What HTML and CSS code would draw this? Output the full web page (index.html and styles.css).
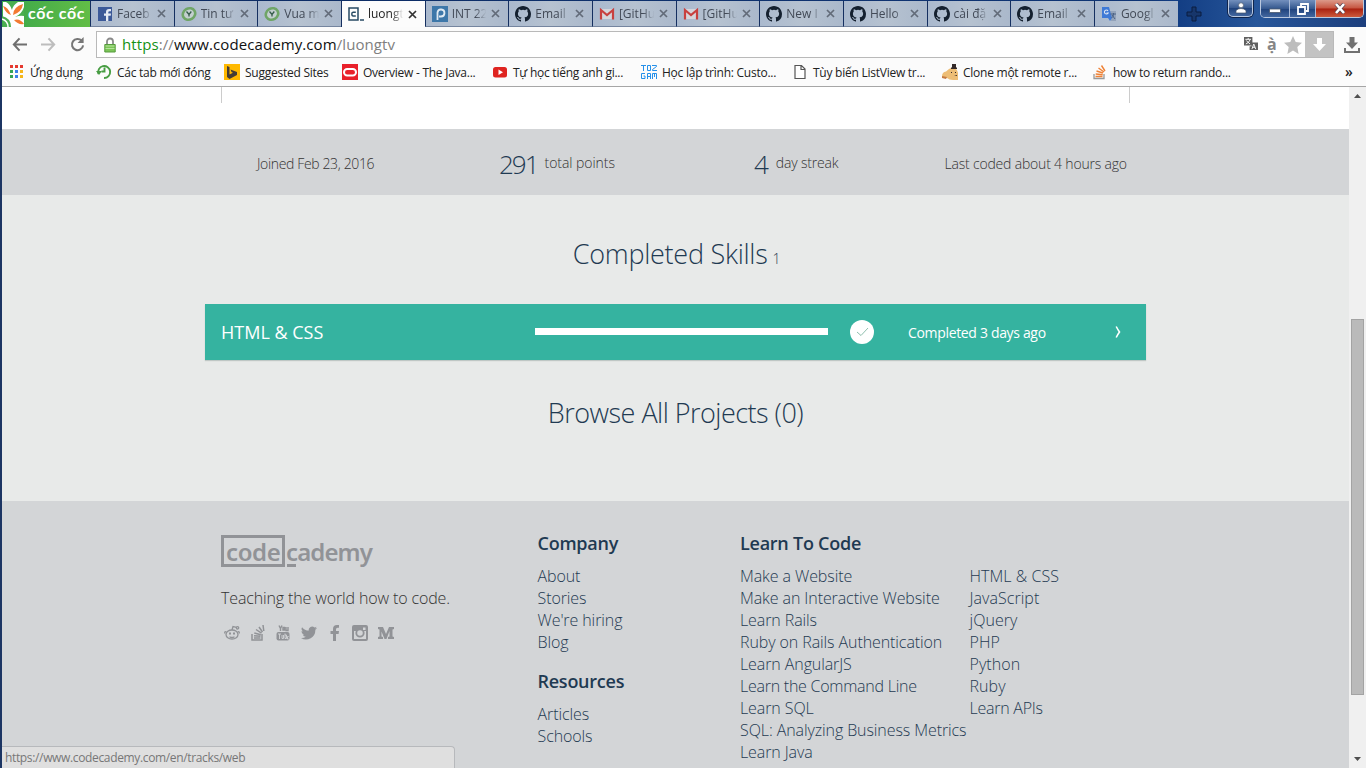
FILE: index.html
```html
<!DOCTYPE html>
<html lang="vi">
<head>
<meta charset="utf-8">
<title>luongtv | Codecademy</title>
<link rel="stylesheet" href="styles.css">
</head>
<body>
<svg width="0" height="0" class="defs">
  <symbol id="github" viewBox="0 0 16 16"><path fill="#14202f" d="M8 0C3.58 0 0 3.58 0 8c0 3.54 2.29 6.53 5.47 7.59.4.07.55-.17.55-.38 0-.19-.01-.82-.01-1.49-2.01.37-2.53-.49-2.69-.94-.09-.23-.48-.94-.82-1.13-.28-.15-.68-.52-.01-.53.63-.01 1.08.58 1.23.82.72 1.21 1.87.87 2.33.66.07-.52.28-.87.51-1.07-1.78-.2-3.64-.89-3.64-3.95 0-.87.31-1.59.82-2.15-.08-.2-.36-1.02.08-2.12 0 0 .67-.21 2.2.82a7.6 7.6 0 0 1 4 0c1.53-1.04 2.2-.82 2.2-.82.44 1.1.16 1.92.08 2.12.51.56.82 1.27.82 2.15 0 3.07-1.87 3.75-3.65 3.95.29.25.54.73.54 1.48 0 1.07-.01 1.93-.01 2.2 0 .21.15.46.55.38A8 8 0 0 0 16 8c0-4.42-3.58-8-8-8z"/></symbol>
  <symbol id="gmail" viewBox="0 0 16 16"><path fill="#d5d5db" d="M1 3h14v10H1z"/><path fill="none" stroke="#c8403f" stroke-width="2.2" d="M2 13.500V4l6 5 6-5v9.500"/></symbol>
  <symbol id="leaf" viewBox="0 0 16 16"><ellipse cx="8" cy="8" rx="6.400" ry="5.600" fill="#c3cfcf" stroke="#6fa567" stroke-width="2.600" transform="rotate(-30 8 8)"/><path fill="none" stroke="#345b49" stroke-width="1.300" d="M5.500 5.500l2.500 3L10.300 5.500M8 8.500v2"/></symbol>
  <symbol id="x" viewBox="0 0 9 9"><path fill="none" stroke="currentColor" stroke-width="1.700" d="M1 1l7 7M8 1L1 8"/></symbol>
</svg>
<div class="window">
  <header class="tabs">
    <div class="brand">
      <svg width="24" height="26" viewBox="0 0 24 26"><path fill="#fff" d="M1 1h21v25H1z"/><path fill="#f37a32" d="M1 5q5 1 8 9-5-1-8-9zM11 14q0-8 10-11-1 8-10 11zM12 19q6-2 10 4-6 1-10-4z"/><path fill="#4aae50" d="M4 1h12q-5 3-6 8-2-6-6-8zM22 6v9q-4-1-9 1 7-3 9-10zM0 15q9 2 9 11H1z"/><path fill="none" stroke="#fff" stroke-width="1.500" d="M0 18q6 2 6 8"/></svg>
      <span>cốc cốc</span>
    </div>
    <div class="tab"><svg class="fav" viewBox="0 0 16 16"><path fill="#3b5998" d="M1 1h14v14H1z"/><path fill="#e4eaf4" d="M9 15V9.700H7V7.500h2V6q0-3 3-3h2v2.200h-1.500Q11.300 5.200 11.300 6.300v1.200H14l-.3 2.200h-2.400V15z"/></svg><span>Faceb</span><svg class="close"><use href="#x"/></svg></div>
    <div class="tab"><svg class="fav"><use href="#leaf"/></svg><span>Tin tư</span><svg class="close"><use href="#x"/></svg></div>
    <div class="tab"><svg class="fav"><use href="#leaf"/></svg><span>Vua m</span><svg class="close"><use href="#x"/></svg></div>
    <div class="tab active"><svg class="fav" viewBox="0 0 16 16"><path fill="none" stroke="#274a63" stroke-width="1.500" d="M1 2h9v12H1zM12 14h4M7.800 6.200H5Q3.800 6.200 3.800 8T5 10h2.800"/></svg><span>luongt</span><svg class="close"><use href="#x"/></svg></div>
    <div class="tab"><svg class="fav" viewBox="0 0 16 16"><path fill="#3d77a9" d="M0 0h16v16H0z"/><path fill="none" stroke="#dfe9f2" stroke-width="1.800" d="M5.500 14V6.500a3.500 3.500 0 1 1 3.500 4H7"/></svg><span>INT 22</span><svg class="close"><use href="#x"/></svg></div>
    <div class="tab"><svg class="fav"><use href="#github"/></svg><span>Email</span><svg class="close"><use href="#x"/></svg></div>
    <div class="tab"><svg class="fav"><use href="#gmail"/></svg><span>[GitHu</span><svg class="close"><use href="#x"/></svg></div>
    <div class="tab"><svg class="fav"><use href="#gmail"/></svg><span>[GitHu</span><svg class="close"><use href="#x"/></svg></div>
    <div class="tab"><svg class="fav"><use href="#github"/></svg><span>New I</span><svg class="close"><use href="#x"/></svg></div>
    <div class="tab"><svg class="fav"><use href="#github"/></svg><span>Hello</span><svg class="close"><use href="#x"/></svg></div>
    <div class="tab"><svg class="fav"><use href="#github"/></svg><span>cài đặ</span><svg class="close"><use href="#x"/></svg></div>
    <div class="tab"><svg class="fav"><use href="#github"/></svg><span>Email</span><svg class="close"><use href="#x"/></svg></div>
    <div class="tab"><svg class="fav" viewBox="0 0 16 16"><path fill="#93a3ba" d="M7 5h8v10h-5z"/><path fill="#3f7ad6" d="M1 1h7l3 11H1zM7 12h4l-2 3z"/><path fill="none" stroke="#dce6f5" stroke-width="1.100" d="M7 4.800a2 2 0 1 0 .2 2.200H5.500"/><path stroke="#4b6285" fill="none" d="M9.500 8H15M12.500 7v1q0 3-2 4M11 9l3 4"/></svg><span>Googl</span><svg class="close"><use href="#x"/></svg></div>
    <svg class="newtab" viewBox="0 0 16 16"><path fill="#17366b" stroke="#0a1c40" d="M6 1h4v5h5v4h-5v5H6v-5H1V6h5z"/></svg>
    <div class="controls">
      <div class="ctl user"><svg width="12" height="12" viewBox="0 0 12 12"><g fill="#fff" stroke="#49586d" stroke-width=".7"><circle cx="6" cy="3.300" r="2.500"/><path d="M1 11V8.500Q3 6.500 6 6.500t5 2V11z"/></g></svg></div>
      <div class="ctl-group">
        <div class="ctl min"><svg width="12" height="12" viewBox="0 0 12 12"><path fill="#fff" stroke="#49586d" stroke-width=".8" d="M.5 6h11v3.500H.5z"/></svg></div>
        <div class="ctl max"><svg width="12" height="12" viewBox="0 0 12 12"><g fill="none" stroke="#fff" stroke-width="1.800"><path d="M4 3V1h7v7H9"/><path d="M1 4h7v7H1z"/></g></svg></div>
        <div class="ctl quit"><svg width="12" height="11" viewBox="0 0 12 11"><path stroke="#5b4450" stroke-width="4" d="M2 1l8 9M10 1L2 10"/><path stroke="#fff" stroke-width="2.600" d="M2 1l8 9M10 1L2 10"/></svg></div>
      </div>
    </div>
  </header>

  <div class="toolbar">
    <svg class="nav" viewBox="0 0 16 16"><path fill="none" stroke="#6f6f6f" stroke-width="2.200" d="M8 1.500L2 8l6 6.500M2 8h14"/></svg>
    <svg class="nav" viewBox="0 0 16 16"><path fill="none" stroke="#bdbdbd" stroke-width="2.200" d="M8 1.500L14 8l-6 6.500M14 8H0"/></svg>
    <svg class="nav" viewBox="0 0 16 16"><path fill="none" stroke="#777" stroke-width="2.200" d="M12.500 4A6 6 0 1 0 14 9"/><path fill="#777" d="M14.500 0v6.500H8z"/></svg>
    <div class="address">
      <svg class="lock" viewBox="0 0 12 16"><path fill="none" stroke="#8b8b8b" stroke-width="1.800" d="M3 8V4.500a3 3 0 0 1 6 0V8"/><path fill="#7cc558" stroke="#569b3c" d="M.8 7.500h10.400v7.500H.8z"/><path stroke="#b5e39c" d="M1.500 9h9M1.500 11.500h9"/></svg>
      <span class="url"><b>https</b><i>://</i>www.codecademy.com<i>/luongtv</i></span>
      <svg class="translate" viewBox="0 0 15 15"><path fill="#606060" d="M0 0h9v9H0zM8 6h7v8H6v-4h2z"/><path fill="none" stroke="#fff" d="M1.500 2.500h6M4.500 1v1.500M6.500 3Q5 6.500 2 7.500M2.500 4l4 3.500M8.500 13l2-5.500 2 5.500M9 11h3"/></svg>
      <span class="accent">ạ̀</span>
      <svg class="star" viewBox="0 0 18 18"><path fill="#bdbdbd" d="M9 0l2.700 6 6.300.700-4.700 4.400L14.600 18 9 14.500 3.400 18l1.300-6.900L0 6.700 6.300 6z"/></svg>
      <div class="save"><svg width="13" height="13" viewBox="0 0 13 13"><path fill="#fff" d="M4 0h5v6h4l-6.500 7L0 6h4z"/></svg></div>
    </div>
    <svg class="download" viewBox="0 0 16 16"><path fill="#717171" d="M5.500 0h5v5.500H14l-6 6.500-6-6.500h3.500zM0 11h2v3h12v-3h2v5H0z"/></svg>
  </div>

  <nav class="bookmarks">
    <a><svg viewBox="0 0 16 16"><path fill="#e5392f" d="M1 1h3v3H1zM6 1h3v3H6zM11 1h3v3h-3z"/><path fill="#36a352" d="M1 6h3v3H1zM1 11h3v3H1z"/><path fill="#3b80e8" d="M6 6h3v3H6zM6 11h3v3H6z"/><path fill="#f5b619" d="M11 6h3v3h-3zM11 11h3v3h-3z"/></svg><span>Ứng dụng</span></a>
    <a><svg viewBox="0 0 16 16"><path fill="none" stroke="#489d43" stroke-width="1.900" d="M2.500 10A6 6 0 1 1 8 14M5.500 7.500H8.500V3.500"/><path fill="#489d43" d="M0 7h6l-3 4z"/></svg><span>Các tab mới đóng</span></a>
    <a><svg viewBox="0 0 16 16"><path fill="#ffb900" d="M0 0h16v16H0z"/><path fill="#443c35" d="M3 2l2.500 1v7.500L9 8.700 7.500 8 6.500 5.500 13 8v3l-7.500 4L3 13z"/></svg><span>Suggested Sites</span></a>
    <a><svg viewBox="0 0 16 16"><path fill="#e9202a" d="M0 0h16v16H0z"/><rect x="2" y="5" width="12" height="6.500" rx="3.200" fill="none" stroke="#fff" stroke-width="2"/></svg><span>Overview - The Java...</span></a>
    <a><svg viewBox="0 0 16 16"><rect x="1" y="3" width="14" height="10.500" rx="2.500" fill="#df2420"/><path fill="#fff" d="M6.500 5.500l4.500 2.700-4.500 2.700z"/></svg><span>Tự học tiếng anh gi...</span></a>
    <a><svg viewBox="0 0 16 16"><path fill="none" stroke="#2490ea" d="M0 1.500h5M2.500 1.500V7M6.500 1.500h3v5h-3zM11 1.500h4.500v1L11.500 5.500v1H16M4 9.500H.5v5H4v-2.500H2.500M6.500 15V9.500h3V15M6.500 12.500h3M11.500 15V9.500h4V15M13.500 9.500V13"/></svg><span>Học lập trình: Custo...</span></a>
    <a><svg viewBox="0 0 16 16"><path fill="#fff" stroke="#555" stroke-width="1.200" d="M3 1.500h6.500L13 5v9.500H3zM9 1.500v4h4"/></svg><span>Tùy biến ListView tr...</span></a>
    <a><svg viewBox="0 0 16 16"><path fill="#edbd75" d="M0 12.500Q0 8 4 7.500L7 5q3-2 6-1 3 2 3 5v7h-5q-4 0-6-2z"/><path fill="#352a29" d="M9 4l1-1V0h4v3l1 1v1H9zM9 8h1v1H9zM13 8h1v1h-1zM12 12l3-1v1z"/><path fill="#c57b41" d="M0 12l5 1-1 2-4-1z"/></svg><span>Clone một remote r...</span></a>
    <a><svg viewBox="0 0 16 16"><path fill="none" stroke="#999" stroke-width="1.300" d="M2 10v4.500h10V10"/><path fill="none" stroke="#ef8236" stroke-width="1.400" d="M3.500 12.500h7M3.700 10l7 .7M4.500 7l6.500 2M6.500 4l5.500 4M9.500 1.500l3.500 5.500"/></svg><span>how to return rando...</span></a>
    <span class="more">»</span>
  </nav>

  <div class="viewport">
    <main class="page">
      <div class="profile"><div class="card"></div></div>
      <section class="stats">
        <span class="joined">Joined Feb 23, 2016</span>
        <span class="points"><strong>291</strong>total points</span>
        <span class="streak"><strong>4</strong>day streak</span>
        <span class="last">Last coded about 4 hours ago</span>
      </section>
      <section class="skills">
        <h2 class="completed"><span>Completed Skills</span><small>1</small></h2>
        <div class="skill">
          <span class="skill-name">HTML &amp; CSS</span>
          <span class="bar"></span>
          <span class="check"><svg width="24" height="24" viewBox="0 0 24 24"><path fill="none" stroke="#8fbfae" d="M7 12l4 3.500 7-7.500"/></svg></span>
          <span class="when">Completed 3 days ago</span>
          <svg class="chev" width="6" height="12" viewBox="0 0 6 12"><path fill="none" stroke="#fff" stroke-width="1.600" d="M1.200.5Q3 4 4.500 6 3 8 1.200 11.500"/></svg>
        </div>
        <h2 class="browse">Browse All Projects (0)</h2>
      </section>
      <footer class="footer">
        <div class="about">
          <div class="logo"><span class="box">code</span><span class="rest">cademy</span></div>
          <p>Teaching the world how to code.</p>
          <div class="social">
            <svg viewBox="0 0 16 16"><g fill="none" stroke="#919397" stroke-width="1.300"><ellipse cx="8" cy="9.500" rx="6" ry="4.500"/><path d="M8 5l1-3.500 3.500.800M5.500 11.700q2.500 1.500 5 0"/><circle cx="13.500" cy="2.800" r="1.200"/><path d="M2.500 7Q0 6 1 8.500M13.500 7q2.500-1 1.500 1.500"/></g><path fill="#919397" d="M5 7.500h2v2H5zM9 7.500h2v2H9z"/></svg>
            <svg viewBox="0 0 16 16"><path fill="none" stroke="#919397" stroke-width="1.500" d="M2 9v6h10V9M4 13h6.500M4 10.700l6.500.6M4.300 8l6.500 1.700M6 4.500l5.500 3.700M9 2l3.500 5M13 0l.8 6"/></svg>
            <svg viewBox="0 0 16 16"><rect x="1.500" y="7" width="13" height="8.500" rx="2" fill="#919397"/><path fill="none" stroke="#919397" stroke-width="1.400" d="M4 .5l1.500 3 1.500-3M5.500 3.500V6M8 2.500h1.500V5H8zM11 2v3.500h2V2"/><path fill="none" stroke="#d3d5d7" stroke-width=".9" d="M3 9h3M4.500 9v5M7 10v3.500h1.500V10M10 8.500v5h1.500V10H10M13.700 11.500h-1.200V14h1.300"/></svg>
            <svg viewBox="0 0 24 24"><path fill="#919397" d="M24 4.600a10 10 0 0 1-2.800.8 5 5 0 0 0 2.100-2.700 10 10 0 0 1-3.100 1.200 4.900 4.900 0 0 0-8.400 4.500A14 14 0 0 1 1.600 3.200a4.900 4.900 0 0 0 1.500 6.500 5 5 0 0 1-2.200-.6 4.900 4.900 0 0 0 4 4.900 5 5 0 0 1-2.300.1 4.900 4.900 0 0 0 4.600 3.400A10 10 0 0 1 0 19.500 14 14 0 0 0 21.500 7.100 10 10 0 0 0 24 4.600z"/></svg>
            <svg viewBox="0 0 16 16"><path fill="#919397" d="M6 16V9H3.500V6H6V4q0-4 4-4h2v2.700h-1.500Q9 2.700 9 4.200V6h3l-.4 3H9v7z"/></svg>
            <svg viewBox="0 0 16 16"><rect x="1" y="1" width="14" height="14" rx="1" fill="none" stroke="#919397" stroke-width="2"/><path fill="#919397" d="M1 1h14v5H1z"/><circle cx="8" cy="8" r="3.700" fill="#d3d5d7" stroke="#919397" stroke-width="1.800"/><path fill="#d3d5d7" d="M11 2.500h2.500V5H11z"/></svg>
            <svg viewBox="0 0 16 16"><path fill="#919397" d="M0 2h5l3 7 3-7h5v2l-1.500.5v7L16 12v2h-6v-2l1.500-.5V6L8.500 14h-2L3.500 6.500v5L5 12v2H0v-2l1.500-.5v-7L0 4z"/></svg>
          </div>
        </div>
        <div class="col company">
          <h3>Company</h3>
          <a>About</a><a>Stories</a><a>We're hiring</a><a>Blog</a>
          <h3>Resources</h3>
          <a>Articles</a><a>Schools</a>
        </div>
        <div class="col learn">
          <h3>Learn To Code</h3>
          <a>Make a Website</a><a>Make an Interactive Website</a><a>Learn Rails</a><a>Ruby on Rails Authentication</a><a>Learn AngularJS</a><a class="tight">Learn the Command Line</a><a>Learn SQL</a><a>SQL: Analyzing Business Metrics</a><a>Learn Java</a>
        </div>
        <div class="col langs">
          <a>HTML &amp; CSS</a><a>JavaScript</a><a>jQuery</a><a>PHP</a><a>Python</a><a>Ruby</a><a class="tight">Learn APIs</a>
        </div>
      </footer>
    </main>
    <div class="scrollbar">
      <svg width="7" height="4" viewBox="0 0 7 4"><path fill="#4f4f4f" d="M0 4h7L3.500 0z"/></svg>
      <div class="thumb"></div>
      <svg width="7" height="4" viewBox="0 0 7 4"><path fill="#4f4f4f" d="M0 0h7L3.500 4z"/></svg>
    </div>
  </div>
  <div class="status">https://www.codecademy.com/en/tracks/web</div>
</div>
</body>
</html>
```
FILE: styles.css
```css
* { box-sizing: border-box; }
body { margin: 0; width: 1366px; height: 768px; overflow: hidden; font-family: "Open Sans", "Noto Sans", sans-serif; font-size: 12px; color: #222; }
svg { display: block; flex: none; }
.defs { position: absolute; }
.window { position: relative; width: 1366px; height: 768px; border-left: 2px solid #1c3563; display: flex; flex-direction: column; background: #fff; }

.tabs { height: 27px; flex: none; display: flex; background: linear-gradient(90deg, #0c2a60 0, #0f3575 84%, #123d83 86%, #27569a 92%, #1d3f7d 100%); padding-top: 1px; }
.brand { width: 88px; height: 26px; display: flex; background: linear-gradient(90deg, #3aa64b, #62bd46); color: #fff; align-items: center; }
.brand span { font: 700 16px/24px Lato, sans-serif; margin: -2px 0 0 2px; letter-spacing: 0.6px; white-space: nowrap; }
.tab { width: 83.67px; flex: none; height: 26px; background: linear-gradient(90deg, #aab9ce, #b6c2d0 50%, #aab8cb); background-clip: padding-box; border-left: 1px solid #152f60; border-bottom: 1px solid #75859f; display: flex; align-items: center; padding: 0 8px 0 6px; color: #424a57; }
.tab.active { background: #fcfcfc; border-bottom: 0; color: #222; }
.fav { width: 16px; height: 16px; }
.tab span { flex: 1; min-width: 0; margin: 0 3px 0 4px; white-space: nowrap; letter-spacing: 0; line-height: 22px; -webkit-mask-image: linear-gradient(90deg, #000 65%, transparent 95%); mask-image: linear-gradient(90deg, #000 65%, transparent 95%); }
.close { width: 9px; height: 9px; color: #626b79; }
.active .close { color: #333; }
.newtab { width: 16px; height: 16px; margin: 5px 0 0 8px; }
.controls { margin: -1px 2px 0 auto; display: flex; gap: 7px; height: 18px; }
.ctl { display: flex; align-items: center; justify-content: center; height: 17px; background: linear-gradient(#7390bd, #35588f 50%, #1f427c 52%, #42679f); }
.user { width: 25px; border: 1px solid #bac8de; border-top: 0; border-radius: 0 0 5px 5px; box-shadow: 0 0 0 1px #10254c; }
.ctl-group { display: flex; border: 1px solid #bac8de; border-top: 0; border-radius: 0 0 5px 5px; overflow: hidden; width: 104px; }
.min { width: 29px; border-right: 1px solid #a9bbd8; }
.max { width: 26px; border-right: 1px solid #a9bbd8; }
.quit { flex: 1; background: linear-gradient(#dc9a8a, #c65440 48%, #a92110 52%, #cc5a3c); }

.toolbar { height: 33px; flex: none; background: #fbfbfb; display: flex; align-items: center; padding: 2px 5px 0 10px; }
.nav { width: 15px; height: 15px; margin-right: 14px; }
.nav + .nav + .nav { margin-right: 11px; }
.address { width: 1238px; height: 27px; border: 1px solid #b9b9b9; background: #fff; display: flex; align-items: center; padding-left: 7px; }
.lock { width: 12px; height: 16px; margin-right: 6px; }
.url { flex: 1; font-size: 15px; letter-spacing: 0.09px; color: #111; padding-bottom: 2px; }
.url b { font-weight: 400; color: #159215; }
.url i { font-style: normal; color: #808080; }
.translate { width: 14px; height: 14px; margin: -2px 9px 0 0; }
.accent { font-size: 16px; line-height: 20px; font-weight: 700; color: #858585; width: 10px; margin: -2px 7px 0 0; }
.star { width: 18px; height: 18px; margin-right: 3px; }
.save { width: 28px; height: 25px; background: #c3c3c3; display: flex; align-items: center; justify-content: center; }
.download { width: 16px; height: 16px; margin-left: 10px; }

.bookmarks { height: 27px; flex: none; background: #fbfbfb; border-bottom: 1px solid #a6a6a6; display: grid; grid-template-columns: 87px 128px 118px 150px 149px 151px 150px 150px 252px 1fr; padding-left: 7px; align-items: center; padding-bottom: 2px; }
.bookmarks a { display: flex; align-items: center; gap: 5px; white-space: nowrap; letter-spacing: -0.25px; }
.bookmarks a svg { width: 16px; height: 16px; }
.more { font-size: 14px; font-weight: 600; line-height: 20px; padding-left: 1px; }

.viewport { flex: 1; min-height: 0; display: flex; }
.page { width: 1347px; height: 681px; overflow: hidden; background: #e8eae9; font-weight: 300; color: #333; }
.profile { height: 42px; background: #fff; padding-left: 219px; }
.card { width: 909px; height: 16px; border: solid #ccc; border-width: 0 1px; }
.stats { height: 66px; background: #d3d5d7; display: grid; grid-template-columns: 242px 255px 190.500px 1fr; padding: 3px 0 0 255px; align-items: center; font-size: 14px; white-space: nowrap; }
.stats span { letter-spacing: -0.19px; }
.stats .joined { letter-spacing: -0.36px; }
.stats .points { letter-spacing: -0.05px; }
.points, .streak { display: flex; align-items: center; height: 40px; padding-bottom: 2px; }
.stats strong { font-size: 26px; line-height: 40px; font-weight: 300; color: #1f3a52; margin: 2px 7px 0 0; letter-spacing: 0; }
.stats .points strong { letter-spacing: -2px; margin-right: 7px; }
.skills { height: 306px; display: flex; flex-direction: column; align-items: center; }
.skills h2 { margin: 0; font-size: 27px; line-height: 40px; font-weight: 300; color: #1f3a52; white-space: nowrap; letter-spacing: -0.27px; }
.skills .completed { padding: 39px 0 0 2px; }
.completed small { font-size: 14px; margin-left: 5px; }
.skills .browse { letter-spacing: -0.52px; }
.skill { margin: 25px 0 33px; width: 941px; height: 56px; flex: none; background: #35b3a0; color: #fff; display: flex; align-items: center; padding-left: 16px; box-shadow: 0 1px 1px #bfc7c5; font-weight: 400; }
.skill-name { width: 314px; font-size: 18px; }
.bar { width: 293px; height: 7px; background: #fff; margin: -1px 22px 0 0; }
.check { width: 24px; height: 24px; border-radius: 50%; background: #fff; margin-right: 34px; }
.when { width: 207px; font-size: 14px; white-space: nowrap; letter-spacing: -0.33px; }
.footer { height: 267px; background: #d3d5d7; padding: 32px 0 0 219px; display: grid; grid-template-columns: 316.500px 202.500px 229.500px 1fr; font-size: 16px; white-space: nowrap; }
.logo { display: flex; height: 34px; padding-top: 2px; color: #919397; font: 600 24px/27px "Noto Sans", sans-serif; letter-spacing: -0.4px; }
.box { width: 64px; height: 32px; border: 3px solid #919397; padding-left: 2px; }
.rest { padding: 3px 0 0 1px; letter-spacing: -0.9px; background: linear-gradient(#919397, #919397) 2px 29px / 9px 3px no-repeat; }
.about p { margin: 20px 0 0; line-height: 22px; letter-spacing: -0.13px; }
.social { display: flex; gap: 9.700px; margin: 16px 0 0 3px; }
.social svg { width: 16px; height: 16px; }
.col { color: #1f3a52; letter-spacing: -0.09px; }
.col h3 { margin: -1px 0 0; height: 33px; line-height: 22px; font-size: 18px; font-weight: 600; letter-spacing: -0.25px; }
.col a { display: block; line-height: 22px; }
.col a + h3 { margin-top: 17px; }
.langs { padding-top: 32px; letter-spacing: 0.05px; }
.col .tight { letter-spacing: -0.25px; }

.scrollbar { width: 17px; background: #f0f0f0; display: flex; flex-direction: column; align-items: center; padding: 7px 0 7px; }
.thumb { width: 13px; height: 376px; background: #bababa; border: 1px solid #a3a3a3; margin: 221px 0 auto; }
.status { position: absolute; left: 0; bottom: 0; width: 453px; height: 22px; background: #dfdfdf; border: 1px solid #b7b9bc; border-width: 1px 1px 0 0; border-radius: 0 4px 0 0; color: #777; font-size: 12px; line-height: 22px; padding-left: 3px; letter-spacing: -0.35px; }
```
